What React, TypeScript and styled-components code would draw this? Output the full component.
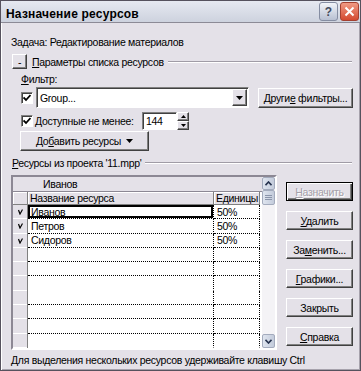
import React from 'react';
import styled, { createGlobalStyle } from 'styled-components';

const FACE = '#e4e1e8';

const GlobalStyle = createGlobalStyle`
  html, body { margin: 0; padding: 0; background: ${FACE}; }
  body {
    font-family: "Liberation Sans", Arial, sans-serif;
    font-size: 10.5px;
    letter-spacing: -0.3px;
    color: #000;
  }
`;

const Window = styled.div`
  width: 361px;
  height: 371px;
  box-sizing: border-box;
  background: ${FACE};
  border: 1px solid #56525e;
  box-shadow: inset 1px 1px #ffffff, inset -1px -1px #a6a2ac;
  display: flex;
  flex-direction: column;
  overflow: hidden;
`;

const TitleBar = styled.div`
  height: 22px;
  box-sizing: border-box;
  flex: none;
  display: flex;
  align-items: flex-start;
  gap: 2px;
  padding: 0 1px 0 5px;
  background: linear-gradient(#e6e9f1, #cdd2de);
  border-bottom: 1px solid #8c8a96;
`;

const TitleText = styled.div`
  flex: 1;
  font-weight: bold;
  font-size: 12px;
  line-height: 14px;
  padding-top: 6px;
  letter-spacing: 0.2px;
`;

const CaptionButton = styled.div<{ $close?: boolean }>`
  width: 19px;
  height: 19px;
  box-sizing: border-box;
  margin-top: 1px;
  border: 1px solid ${p => (p.$close ? '#a44030' : '#858da2')};
  border-radius: 3px;
  background: ${p =>
    p.$close ? 'linear-gradient(#f09a84, #d44a30)' : 'linear-gradient(#f2f4f9, #b8c0d2)'};
  display: flex;
  align-items: center;
  justify-content: center;
  color: #444c5e;
  font-weight: bold;
  font-size: 12px;
  letter-spacing: 0;
`;

const Body = styled.div`
  flex: 1;
  display: flex;
  flex-direction: column;
  padding: 12px 8px 0 9px;
`;

const Line = styled.div<{ $mt?: number; $ml?: number }>`
  line-height: 14px;
  height: 14px;
  white-space: nowrap;
  margin-top: ${p => p.$mt ?? 0}px;
  margin-left: ${p => p.$ml ?? 0}px;
`;

const Section = styled.div<{ $mt: number }>`
  display: flex;
  align-items: center;
  height: 15px;
  margin-top: ${p => p.$mt}px;
  white-space: nowrap;
`;

const Rule = styled.div`
  flex: 1;
  height: 0;
  margin-left: 4px;
  border-top: 1px solid #a09ca6;
  border-bottom: 1px solid #fff;
`;

const Btn = styled.button<{ $w: number; $h?: number; $default?: boolean; $disabled?: boolean }>`
  font: inherit;
  letter-spacing: inherit;
  color: ${p => (p.$disabled ? '#a4a0a8' : '#000')};
  text-shadow: ${p => (p.$disabled ? '1px 1px #fff' : 'none')};
  width: ${p => p.$w}px;
  height: ${p => p.$h ?? 19}px;
  flex: none;
  box-sizing: border-box;
  padding: 0;
  background: ${FACE};
  border: 1px solid;
  border-color: ${p => (p.$default ? '#000' : '#fff #404040 #404040 #fff')};
  box-shadow: ${p =>
    p.$default
      ? 'inset 1px 1px #fff, inset -1px -1px #404040, inset -2px -2px #808080'
      : 'inset -1px -1px #808080'};
  display: flex;
  align-items: center;
  justify-content: center;
  gap: 5px;
  white-space: nowrap;
`;

const Row = styled.div<{ $mt: number; $ml?: number; $h: number }>`
  display: flex;
  align-items: center;
  height: ${p => p.$h}px;
  margin-top: ${p => p.$mt}px;
  margin-left: ${p => p.$ml ?? 0}px;
  white-space: nowrap;
`;

const CheckBox = styled.div`
  width: 12px;
  height: 12px;
  flex: none;
  box-sizing: border-box;
  background: #fff;
  border: 1px solid;
  border-color: #808080 #fff #fff #808080;
  box-shadow: inset 1px 1px #404040;
  display: flex;
  align-items: center;
  justify-content: center;
`;

const Sunken = styled.div<{ $w: number; $h: number; $ml?: number }>`
  width: ${p => p.$w}px;
  height: ${p => p.$h}px;
  margin-left: ${p => p.$ml ?? 0}px;
  flex: none;
  box-sizing: border-box;
  background: #fff;
  border: 1px solid;
  border-color: #808080 #fff #fff #808080;
  box-shadow: inset 1px 1px #404040;
  display: flex;
  align-items: center;
  padding: 1px 1px 1px 3px;
`;

const Field = styled.div`
  flex: 1;
`;

const ArrowBox = styled.div<{ $w: number; $h: number }>`
  width: ${p => p.$w}px;
  height: ${p => p.$h}px;
  flex: none;
  box-sizing: border-box;
  background: ${FACE};
  border: 1px solid;
  border-color: #fff #404040 #404040 #fff;
  box-shadow: inset -1px -1px #808080;
  display: flex;
  align-items: center;
  justify-content: center;
`;

const Label = styled.span<{ $w: number }>`
  width: ${p => p.$w}px;
  padding-left: 2px;
  flex: none;
`;

const SpinStack = styled.div`
  display: flex;
  flex-direction: column;
`;

const Main = styled.div`
  display: flex;
  gap: 9px;
  margin-top: 5px;
  margin-left: 1px;
`;

const Grid = styled.div`
  width: 266px;
  height: 175px;
  box-sizing: border-box;
  flex: none;
  border: 2px solid;
  border-color: #8c8894 #fff #fff #8c8894;
  background: #fff;
  display: flex;
`;

const Sheet = styled.div`
  flex: 1;
  display: flex;
  flex-direction: column;
`;

const EditBar = styled.div`
  height: 15px;
  box-sizing: border-box;
  flex: none;
  background: ${FACE};
  border-bottom: 1px solid #8c8894;
  padding-left: 30px;
  line-height: 14px;
`;

const HeaderRow = styled.div`
  height: 13px;
  flex: none;
  display: flex;
`;

const HeadCell = styled.div<{ $w: number; $pl?: number }>`
  width: ${p => p.$w}px;
  box-sizing: border-box;
  background: ${FACE};
  border-right: 1px solid #808080;
  border-bottom: 1px solid #808080;
  box-shadow: inset 1px 1px #fff;
  padding-left: ${p => p.$pl ?? 0}px;
  line-height: 12px;
  white-space: nowrap;
  overflow: hidden;
`;

const DataRow = styled.div`
  height: 14.3px;
  flex: none;
  display: flex;
`;

const RowHead = styled.div`
  width: 15px;
  box-sizing: border-box;
  background: ${FACE};
  border-right: 1px solid #808080;
  box-shadow: inset 0 -1px #fff;
  display: flex;
  align-items: center;
  justify-content: center;
`;

const Cell = styled.div<{ $w: number; $pl: number; $line: boolean; $selected?: boolean }>`
  width: ${p => p.$w}px;
  box-sizing: border-box;
  color: #000;
  border-right: 1px dotted #000;
  border-bottom: 1px ${p => (p.$line ? 'dotted #000' : 'solid transparent')};
  box-shadow: ${p => (p.$selected ? 'inset 0 0 0 2px #000' : 'none')};
  padding-left: ${p => p.$pl}px;
  display: flex;
  align-items: center;
  white-space: nowrap;
`;

const ScrollBar = styled.div`
  width: 13px;
  flex: none;
  display: flex;
  flex-direction: column;
  background: #f4f3f6;
`;

const ScrollPart = styled.div<{ $h: number }>`
  height: ${p => p.$h}px;
  flex: none;
  box-sizing: border-box;
  border: 1px solid #a3abbd;
  border-radius: 2px;
  background: linear-gradient(90deg, #dfe5ef, #c3cbdb);
  display: flex;
  align-items: center;
  justify-content: center;
`;

const Track = styled.div`
  flex: 1;
`;

const ButtonColumn = styled.div`
  width: 67px;
  display: flex;
  flex-direction: column;
  gap: 10px;
  padding-top: 7px;
`;

const Status = styled.div`
  margin-top: 3px;
  margin-left: 1px;
  line-height: 14px;
  white-space: nowrap;
`;

const Check = () => (
  <svg width="8" height="8" viewBox="0 0 8 8">
    <path d="M0.5 3.5 L3 6 L7.5 1" fill="none" stroke="#000" strokeWidth="1.8" />
  </svg>
);

const SmallCheck = () => (
  <svg width="5" height="6" viewBox="0 0 5 6">
    <path d="M0.5 1 L2 5 L4.5 0.5" fill="none" stroke="#000" strokeWidth="1.2" />
  </svg>
);

const DownTri = () => (
  <svg width="7" height="4" viewBox="0 0 7 4">
    <path d="M0 0 H7 L3.5 4 Z" fill="#000" />
  </svg>
);

const Chevron = ({ up }: { up?: boolean }) => (
  <svg width="7" height="5" viewBox="0 0 7 5">
    <path
      d={up ? 'M0.5 4.2 L3.5 1 L6.5 4.2' : 'M0.5 0.8 L3.5 4 L6.5 0.8'}
      fill="none"
      stroke="#26324e"
      strokeWidth="1.6"
    />
  </svg>
);

const rows = [
  { name: 'Иванов', units: '50%', check: true },
  { name: 'Петров', units: '50%', check: true },
  { name: 'Сидоров', units: '50%', check: true },
  ...Array.from({ length: 7 }, () => ({ name: '', units: '', check: false })),
];

export default function App() {
  return (
    <>
      <GlobalStyle />
      <Window>
        <TitleBar>
          <TitleText>Назначение ресурсов</TitleText>
          <CaptionButton>?</CaptionButton>
          <CaptionButton $close>
            <svg width="11" height="11" viewBox="0 0 11 11">
              <path d="M1.5 1.5 L9.5 9.5 M9.5 1.5 L1.5 9.5" stroke="#fff" strokeWidth="2" />
            </svg>
          </CaptionButton>
        </TitleBar>
        <Body>
          <Line $ml={1}>Задача: Редактирование материалов</Line>
          <Section $mt={5}>
            <ArrowBox $w={15} $h={15} style={{ marginLeft: 2, marginRight: 5 }}>-</ArrowBox>
            <span>
              <u>П</u>араметры списка ресурсов
            </span>
            <Rule />
          </Section>
          <Line $mt={3} $ml={11}>
            <u>Ф</u>ильтр:
          </Line>
          <Row $mt={1} $ml={11} $h={21}>
            <CheckBox>
              <Check />
            </CheckBox>
            <Sunken $w={213} $h={21} $ml={3}>
              <Field>Group...</Field>
              <ArrowBox $w={15} $h={17}>
                <DownTri />
              </ArrowBox>
            </Sunken>
            <Btn $w={95} $h={20} style={{ marginLeft: 9 }}>
              <span>
                Други<u>е</u> фильтры...
              </span>
            </Btn>
          </Row>
          <Row $mt={4} $ml={11} $h={18}>
            <CheckBox>
              <Check />
            </CheckBox>
            <Label $w={107}>
              <u>Д</u>оступные не менее:
            </Label>
            <Sunken $w={35} $h={18}>
              <Field>144</Field>
            </Sunken>
            <SpinStack>
              <ArrowBox $w={12} $h={9}>
                <svg width="5" height="3" viewBox="0 0 5 3">
                  <path d="M0 3 H5 L2.5 0 Z" fill="#000" />
                </svg>
              </ArrowBox>
              <ArrowBox $w={12} $h={9}>
                <svg width="5" height="3" viewBox="0 0 5 3">
                  <path d="M0 0 H5 L2.5 3 Z" fill="#000" />
                </svg>
              </ArrowBox>
            </SpinStack>
          </Row>
          <Row $mt={1} $ml={10} $h={20}>
            <Btn $w={129} $h={20}>
              <span>
                До<u>б</u>авить ресурсы
              </span>
              <DownTri />
            </Btn>
          </Row>
          <Section $mt={4}>
            <span style={{ marginLeft: 2 }}>
              <u>Р</u>есурсы из проекта '11.mpp'
            </span>
            <Rule />
          </Section>
          <Main>
            <Grid>
              <Sheet>
                <EditBar>Иванов</EditBar>
                <HeaderRow>
                  <HeadCell $w={15} />
                  <HeadCell $w={186} $pl={2}>
                    Название ресурса
                  </HeadCell>
                  <HeadCell $w={46} $pl={2}>
                    Единицы
                  </HeadCell>
                </HeaderRow>
                {rows.map((r, i) => {
                  const line = i !== 5 && i !== 9;
                  return (
                    <DataRow key={i}>
                      <RowHead>{r.check && <SmallCheck />}</RowHead>
                      <Cell $w={186} $pl={3} $line={line} $selected={i === 0}>
                        {r.name}
                      </Cell>
                      <Cell $w={46} $pl={3} $line={line}>
                        {r.units}
                      </Cell>
                    </DataRow>
                  );
                })}
              </Sheet>
              <ScrollBar>
                <ScrollPart $h={13}>
                  <Chevron up />
                </ScrollPart>
                <ScrollPart $h={15}>
                  <svg width="7" height="6" viewBox="0 0 7 6">
                    <path d="M0 0.5 H7 M0 2.5 H7 M0 4.5 H7" stroke="#8a94aa" strokeWidth="1" />
                  </svg>
                </ScrollPart>
                <Track />
                <ScrollPart $h={14}>
                  <Chevron />
                </ScrollPart>
              </ScrollBar>
            </Grid>
            <ButtonColumn>
              <Btn $w={67} $default $disabled>
                <span>
                  <u>Н</u>азначить
                </span>
              </Btn>
              <Btn $w={67}>
                <span>
                  <u>У</u>далить
                </span>
              </Btn>
              <Btn $w={67}>
                <span>
                  За<u>м</u>енить...
                </span>
              </Btn>
              <Btn $w={67}>
                <span>
                  <u>Г</u>рафики...
                </span>
              </Btn>
              <Btn $w={67}>
                <span>Закрыть</span>
              </Btn>
              <Btn $w={67}>
                <span>
                  <u>С</u>правка
                </span>
              </Btn>
            </ButtonColumn>
          </Main>
          <Status>Для выделения нескольких ресурсов удерживайте клавишу Ctrl</Status>
        </Body>
      </Window>
    </>
  );
}
